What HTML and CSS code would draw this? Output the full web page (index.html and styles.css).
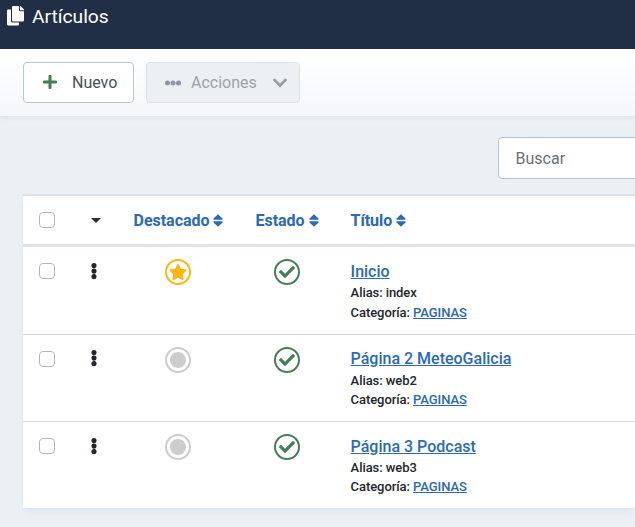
FILE: index.html
```html
<!DOCTYPE html>
<html lang="es">
<head>
<meta charset="utf-8">
<title>Artículos</title>
<link rel="stylesheet" href="styles.css">
</head>
<body>
<svg class="defs" aria-hidden="true">
  <symbol id="sort" viewBox="0 0 10 13"><path d="M5 .3 9.500 4.600Q10 5.700 9 5.700H1Q0 5.700.5 4.600ZM5 12.700.5 8.400Q0 7.300 1 7.300H9Q10 7.300 9.500 8.400Z"/></symbol>
  <symbol id="check" viewBox="0 0 512 512"><path d="M173.900 439.400 7.500 273c-10-10-10-26.200 0-36.200l36.200-36.200c10-10 26.200-10 36.200 0L192 312.700 432.100 72.600c10-10 26.200-10 36.200 0l36.200 36.200c10 10 10 26.200 0 36.200L210.100 439.400c-10 10-26.200 10-36.200 0z"/></symbol>
  <symbol id="star" viewBox="0 0 576 512"><path d="M259.300 17.800 194 150.200 47.900 171.500c-26.200 3.800-36.700 36.100-17.700 54.600l105.700 103-25 145.500c-4.500 26.300 23.200 46 46.400 33.700L288 439.600l130.700 68.700c23.200 12.200 50.900-7.400 46.400-33.700l-25-145.500 105.700-103c19-18.500 8.500-50.800-17.700-54.600L382 150.200 316.700 17.800c-11.700-23.600-45.600-23.900-57.400 0z"/></symbol>
  <symbol id="dots" viewBox="0 0 6 17"><circle cx="3" cy="2.600" r="2.550"/><circle cx="3" cy="8.100" r="2.550"/><circle cx="3" cy="13.600" r="2.550"/></symbol>
</svg>
<header class="header">
  <svg class="copy" viewBox="0 0 18 20"><path d="M1.200 3.500H4V15q0 1.600 1.600 1.600H12V18q0 1.500-1.200 1.500H1.200Q0 19.500 0 18.300V4.700Q0 3.500 1.200 3.500Z"/><path d="M6 0h6v4q0 1.200 1.200 1.200H17v9q0 1.300-1.200 1.300H6.200Q5 15.500 5 14.300V1.200Q5 0 6 0Z"/><path d="M13 0h.5L17 3.500V4.200H13Z"/></svg>
  <h1>Artículos</h1>
</header>
<div class="toolbar">
  <button class="btn new"><svg viewBox="0 0 14 14"><path d="M7 1.300V12.700M1.300 7H12.700"/></svg>Nuevo</button>
  <button class="btn actions" disabled><svg class="ellipsis" viewBox="0 0 16 6"><circle cx="2.500" cy="3" r="2.500"/><circle cx="8" cy="3" r="2.500"/><circle cx="13.500" cy="3" r="2.500"/></svg>Acciones<svg class="chevron" viewBox="0 0 14 10"><path d="M1.500 2 7 7.500 12.500 2"/></svg></button>
</div>
<main class="content">
  <div class="search"><input type="text" placeholder="Buscar"></div>
  <div class="table">
    <div class="row head">
      <span class="box"></span>
      <span class="caret"></span>
      <a class="sort center">Destacado<svg><use href="#sort"/></svg></a>
      <a class="sort center">Estado<svg><use href="#sort"/></svg></a>
      <a class="sort last">Título<svg><use href="#sort"/></svg></a>
    </div>
    <div class="row">
      <span class="box"></span>
      <svg class="drag"><use href="#dots"/></svg>
      <span class="state star"><svg><use href="#star"/></svg></span>
      <span class="state ok"><svg><use href="#check"/></svg></span>
      <div class="info"><a href="#" class="title">Inicio</a><div>Alias: index</div><div>Categoría: <a href="#">PAGINAS</a></div></div>
    </div>
    <div class="row">
      <span class="box"></span>
      <svg class="drag raised"><use href="#dots"/></svg>
      <span class="state off"><i></i></span>
      <span class="state ok"><svg><use href="#check"/></svg></span>
      <div class="info tight"><a href="#" class="title">Página 2 MeteoGalicia</a><div>Alias: web2</div><div>Categoría: <a href="#">PAGINAS</a></div></div>
    </div>
    <div class="row">
      <span class="box"></span>
      <svg class="drag"><use href="#dots"/></svg>
      <span class="state off"><i></i></span>
      <span class="state ok"><svg><use href="#check"/></svg></span>
      <div class="info close"><a href="#" class="title">Página 3 Podcast</a><div>Alias: web3</div><div>Categoría: <a href="#">PAGINAS</a></div></div>
    </div>
  </div>
</main>
</body>
</html>
```
FILE: styles.css
```css
* { box-sizing: border-box; }
body { margin: 0; height: 527px; overflow: hidden; background: #ebf0f5; color: #22262a; font: 16px/24px Roboto, sans-serif; }
.defs { display: none; }
svg { display: block; flex: none; fill: currentColor; }
.header { display: flex; position: relative; z-index: 1; height: 49px; padding: 6px 0 0 7px; gap: 7px; background: #202f46; color: #fff; }
.header h1 { margin: -2px 0 0; font-size: 19.200px; font-weight: 400; line-height: 25px; }
.copy { width: 18px; height: 20px; }
.toolbar { display: flex; gap: 12px; height: 67px; padding: 13px 23px; background: linear-gradient(#fff, #f4f7fb); box-shadow: 0 1px 5px #d2dfed; position: relative; }
.btn { display: flex; align-items: center; height: 41px; padding: 0; border: 1px solid #bac5d5; border-radius: 4px; background: #fff; color: #495057; font: 16px/24px Roboto, sans-serif; }
.new { width: 111px; padding-left: 19px; gap: 15px; }
.new svg { width: 14px; height: 14px; margin-top: -1px; fill: none; stroke: #457d54; stroke-width: 3; stroke-linecap: round; }
.actions { width: 154px; padding-left: 18px; border-color: #dce2e9; background: #edf0f2; color: #9ea3a7; }
.ellipsis { width: 16px; height: 6px; margin-right: 10px; color: #8c95a6; }
.chevron { width: 14px; height: 10px; margin-left: 16px; fill: none; stroke: #9b9fa3; stroke-width: 2.800; stroke-linecap: round; }
.content { padding: 21px 0 0 23px; }
.search { padding-left: 475px; height: 57px; overflow: hidden; }
.search input { width: 220px; height: 42px; padding: 0 16px 0 16.500px; border: 1px solid #b2c3df; border-radius: 4px; background: #fff; font: 16px/24px Roboto, sans-serif; }
.search input::placeholder { color: #6b7075; opacity: 1; }
.table { border-top: 2px solid #dee2e8; background: #fff; box-shadow: 0 4px 8px -2px #d3e0ee; }
.row { display: grid; grid-template-columns: 44px 40px 78px 109px 1fr; height: 87px; padding: 12px 0 0 16px; border-top: 1px solid #dadee3; align-items: start; }
.row.head + .row { border-top: 0; }
.head { grid-template-columns: 48px 40px 103px 114px 1fr; height: 51px; padding-top: 0; border-top: 0; border-bottom: 3px solid #dee2e8; align-items: center; }
.box { width: 16px; height: 16px; margin-top: 4px; border: 1px solid #b5b6b8; border-radius: 4px; background: #fff; }
.head .box { margin: 0; }
.caret { width: 10px; margin-left: 4px; border: 5px solid transparent; border-top-color: #272f37; border-bottom: 0; }
.sort { display: flex; align-items: center; gap: 4px; padding-top: 1px; color: #2a69b8; font-weight: 700; letter-spacing: -.03px; }
.sort svg { width: 10px; height: 13px; margin-top: -1px; }
.head .center { justify-content: center; }
.last { margin-left: 6.500px; }
.drag { width: 6px; height: 17px; margin: 4px 0 0 8px; }
.raised { margin-top: 3px; }
.state { display: grid; place-items: center; width: 26px; height: 26px; margin-left: 42px; border: 2px solid; border-radius: 50%; }
.state.ok { margin-left: 73px; color: #457d54; }
.ok svg { width: 16px; height: 16px; }
.star { color: #ffb514; }
.star svg { width: 18px; height: 16px; }
.off { color: #cdcdcd; }
.off i { width: 16px; height: 16px; border-radius: 50%; background: currentColor; }
.info { margin-left: 40.600px; padding-top: 1px; font-size: 13px; font-weight: 500; line-height: 20px; letter-spacing: -.07px; }
.info a { color: #2a69b8; text-decoration: underline; }
.info .title { display: block; font-size: 16px; line-height: 24px; letter-spacing: 0; margin-bottom: -1px; }
.tight { padding-top: 0; line-height: 19px; }
.tight .title { margin-bottom: 0; }
.close { line-height: 19px; }
```
